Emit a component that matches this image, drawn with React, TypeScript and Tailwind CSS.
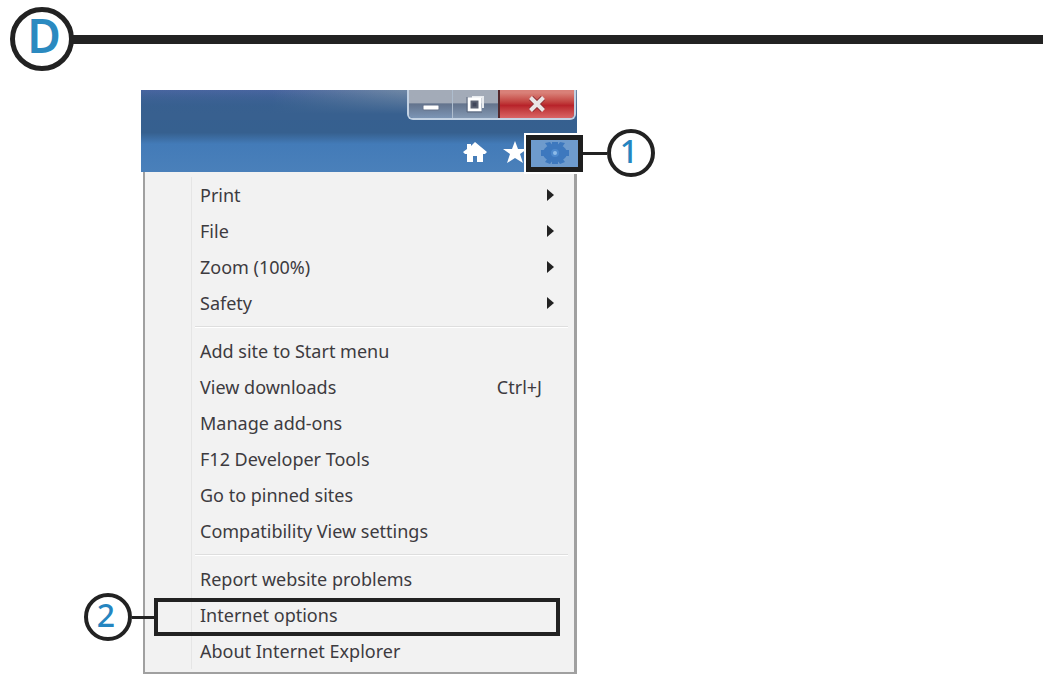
import { Fragment } from "react";

type MenuItem = {
  label: string;
  submenu?: boolean;
  shortcut?: string;
  step?: string;
};

const MENU_GROUPS: MenuItem[][] = [
  [
    { label: "Print", submenu: true },
    { label: "File", submenu: true },
    { label: "Zoom (100%)", submenu: true },
    { label: "Safety", submenu: true },
  ],
  [
    { label: "Add site to Start menu" },
    { label: "View downloads", shortcut: "Ctrl+J" },
    { label: "Manage add-ons" },
    { label: "F12 Developer Tools" },
    { label: "Go to pinned sites" },
    { label: "Compatibility View settings" },
  ],
  [
    { label: "Report website problems" },
    { label: "Internet options", step: "2" },
    { label: "About Internet Explorer" },
  ],
];

function StepCircle({ children }: { children: string }) {
  return (
    <span className="flex size-12 shrink-0 justify-center rounded-full border-4 border-[#222] bg-white pr-1 text-[32px] leading-9 font-medium text-[#2585c0]">
      {children}
    </span>
  );
}

function SectionHeading() {
  return (
    <header className="flex items-center">
      <h1 className="flex size-16 shrink-0 items-center justify-center rounded-full border-[5px] border-[#222] pb-2 pl-1 text-[46px] leading-none font-semibold text-[#2b8ac0]">
        D
      </h1>
      <div className="-ml-px h-[9px] flex-1 bg-[#222]" />
    </header>
  );
}

function WindowControls() {
  return (
    <div className="mr-px flex h-[30px] overflow-hidden rounded-b-md border-x-2 border-b-2 border-[#c3d2e3]">
      <button
        type="button"
        aria-label="Minimize"
        className="flex w-11 items-center justify-center border-r border-[#aebdce] bg-linear-to-b from-[#a3abb8] from-45% via-[#64748d] via-50% to-[#7c95b5]"
      >
        <svg viewBox="0 0 18 8" className="mt-2 h-2 w-[18px]" aria-hidden>
          <rect x="1" y="1" width="16" height="5" rx="1" fill="#fff" stroke="#66738a" />
        </svg>
      </button>
      <button
        type="button"
        aria-label="Restore"
        className="flex w-[45px] items-center justify-center bg-linear-to-b from-[#a3abb8] from-45% via-[#64748d] via-50% to-[#8499b3]"
      >
        <svg viewBox="0 0 20 18" className="h-[18px] w-5" fill="none" aria-hidden>
          <path d="M6 2h11v11" stroke="#e8ebef" strokeWidth="2" />
          <rect x="3" y="4" width="11" height="11" fill="#5c6272" stroke="#fff" strokeWidth="3" />
          <rect x="6.5" y="7.5" width="4" height="4" fill="#41465a" />
          <path d="M1 2v15h15" stroke="#5b677d" />
        </svg>
      </button>
      <button
        type="button"
        aria-label="Close"
        className="flex w-[76px] items-center justify-center border-l-2 border-[#54282c] bg-linear-to-b from-[#d98078] from-10% via-[#b8222a] via-55% to-[#d96465]"
      >
        <svg viewBox="0 0 20 16" className="h-4 w-5" aria-hidden>
          <path d="M4 2l12 12M16 2L4 14" stroke="#8f2e34" strokeWidth="6" />
          <path d="M3.500 1.500L16.500 14.500M16.500 1.500L3.500 14.500" stroke="#e9e5e5" strokeWidth="4" />
        </svg>
      </button>
    </div>
  );
}

function Toolbar() {
  return (
    <div className="relative flex h-[52px] items-center pt-3">
      <div className="ml-auto flex items-center gap-4 pr-[50px]">
        <button type="button" aria-label="Home">
          <svg viewBox="0 0 24 20" className="h-5 w-6" fill="#fff" aria-hidden>
            <path d="M12 0L8 4V2H4v5L0 10l2 2h2v8h6v-6h4v6h6v-8h2l2-2z" />
          </svg>
        </button>
        <button type="button" aria-label="Favorites">
          <svg viewBox="0 0 24 22" className="h-[22px] w-6" fill="#fff" aria-hidden>
            <path d="M12 0l3 8h9l-7 5 3 9-8-5-8 5 3-9-7-5h9z" />
          </svg>
        </button>
      </div>
      {/* step 1: outlined tools button, runs past the window edge */}
      <div className="absolute top-[9px] left-[385px] flex items-center">
        <button
          type="button"
          aria-label="Tools"
          className="flex h-[37px] w-[57px] items-center justify-center border-[5px] border-[#1e1e1e] bg-[#6e9bcd] ring-2 ring-white"
        >
          <svg viewBox="0 0 30 24" className="h-6 w-[30px]" aria-hidden>
            <g fill="#3d78be">
              <ellipse cx="15" cy="12" rx="12" ry="9" />
              <path d="M12 1h6v22h-6zM1 9h28v6H1zM5 2l5-1 15 20-5 2zM20 1l5 1L10 23l-5-2z" />
            </g>
            <circle cx="15" cy="12" r="4" fill="#4d89cd" />
            <circle cx="15" cy="12" r="2" fill="#8dbbe8" />
          </svg>
        </button>
        <div className="h-[3px] w-6 bg-[#222]" />
        <StepCircle>1</StepCircle>
      </div>
    </div>
  );
}

function MenuRow({ item }: { item: MenuItem }) {
  return (
    <li className="relative">
      <button
        type="button"
        className="flex h-9 w-full items-center pr-5 pl-[55px] text-left text-lg text-[#3d3b3f]"
      >
        <span className="flex-1 whitespace-nowrap">{item.label}</span>
        {item.shortcut && <span className="mr-3">{item.shortcut}</span>}
        {item.submenu && (
          <svg viewBox="0 0 7 12" className="h-3 w-[7px]" fill="#222" aria-hidden>
            <path d="M0 0l7 6-7 6z" />
          </svg>
        )}
      </button>
      {item.step && (
        <div className="pointer-events-none absolute -top-1 right-[14px] -left-[61px] flex items-center">
          <StepCircle>{item.step}</StepCircle>
          <div className="h-[3px] w-[22px] bg-[#222]" />
          <div className="h-[38px] flex-1 border-4 border-[#222]" />
        </div>
      )}
    </li>
  );
}

function ToolsMenu() {
  return (
    <div className="ml-0.5 border-r-[3px] border-b-2 border-l-2 border-[#a0a0a0] bg-[#f2f2f2] pt-[5px] pb-[3px]">
      <ul className="relative before:absolute before:inset-y-0 before:left-[46px] before:w-px before:bg-[#e5e5e5]">
        {MENU_GROUPS.map((group, i) => (
          <Fragment key={group[0].label}>
            {i > 0 && (
              <li role="separator" className="flex h-3 items-center pr-1.5 pl-[50px]">
                <div className="h-0.5 flex-1 border-t border-[#dedede] bg-white" />
              </li>
            )}
            {group.map((item) => (
              <MenuRow key={item.label} item={item} />
            ))}
          </Fragment>
        ))}
      </ul>
    </div>
  );
}

export default function App() {
  return (
    <main className="min-h-screen overflow-hidden bg-white pt-[7px] pr-[3px] pl-2.5 font-['Noto_Sans','Open_Sans',sans-serif]">
      <SectionHeading />
      <section className="mt-[19px] ml-[131px] w-[436px]">
        <div className="bg-[linear-gradient(to_bottom,#4965a0_0%,#365f90_20%,#36608f_52%,#437bb8_66%,#4a80ba_100%)]">
          <div className="flex justify-end bg-[linear-gradient(to_bottom,transparent,#38608f_80%),linear-gradient(to_right,transparent_30%,#6f87a5_60%,#6f87a5)]">
            <WindowControls />
          </div>
          <Toolbar />
        </div>
        <ToolsMenu />
      </section>
    </main>
  );
}
